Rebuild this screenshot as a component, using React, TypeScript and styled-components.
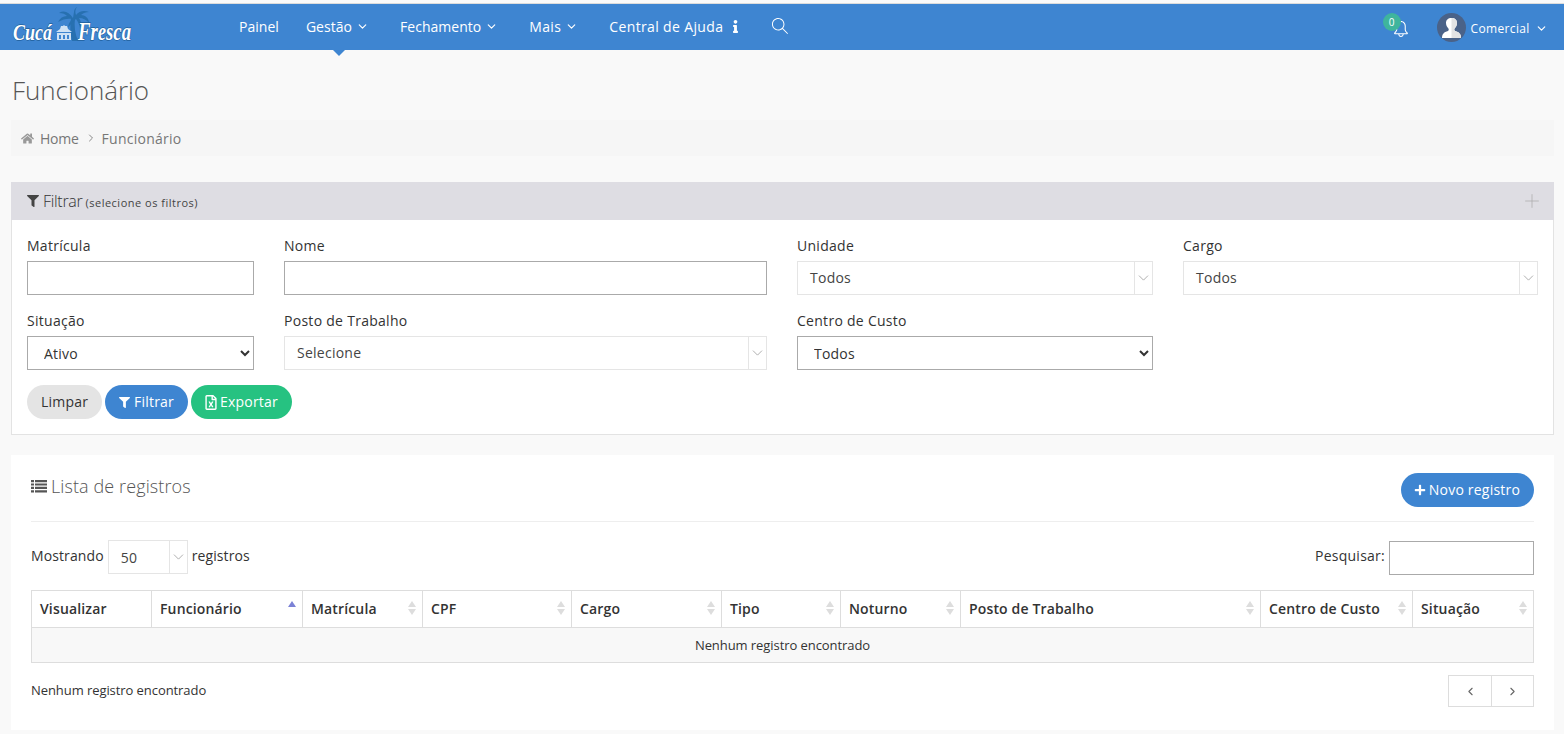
import React from "react";
import styled, { createGlobalStyle } from "styled-components";
import { ChevronDown, ChevronLeft, ChevronRight, Plus } from "lucide-react";
import { FaFilter, FaHome, FaInfo, FaPlus, FaRegFileExcel } from "react-icons/fa";
import { SlBell, SlMagnifier } from "react-icons/sl";

const Global = createGlobalStyle`
  html, body { margin: 0; padding: 0; background: #f9f9f9; }
  body { font-family: "Open Sans", "Liberation Sans", sans-serif; font-size: 14px; color: #333; overflow: hidden; }
  * { box-sizing: border-box; }
`;

const Page = styled.div`
  width: 1564px;
  height: 734px;
  background: #f9f9f9;
  overflow: hidden;
`;
const TopStrip = styled.div`
  height: 4px;
  background: #fafafa;
  border-bottom: 1px solid #dcdcdc;
`;
const TopBar = styled.header`
  height: 46px;
  background: #3e85d1;
  display: flex;
  align-items: center;
  color: #fff;
`;
const LogoBox = styled.div`
  width: 239px;
  padding-left: 10px;
  height: 46px;
  flex: none;
`;
const Nav = styled.nav`
  display: flex;
  align-items: center;
  gap: 27px;
  flex: 1;
`;
const NavItem = styled.a<{ $active?: boolean; $wide?: boolean }>`
  position: relative;
  display: flex;
  align-items: center;
  height: 46px;
  padding-bottom: 2px;
  font-size: 14px;
  letter-spacing: ${(p) => (p.$wide ? "0.36px" : "0.03px")};
  color: #fff;
  svg { flex: none; }
  ${(p) => p.$active && `
    &::after {
      content: "";
      position: absolute;
      left: 27px;
      top: 46px;
      border: 6px solid transparent;
      border-top-color: #3e85d1;
      border-bottom: 0;
    }
  `}
`;
const NavChevron = styled(ChevronDown)`
  margin-left: 4px;
  margin-right: 4px;
`;
const InfoIcon = styled(FaInfo)`
  margin-left: 6px;
  margin-right: 3px;
`;
const NavRight = styled.div`
  display: flex;
  align-items: center;
  height: 46px;
  padding-right: 16.5px;
`;
const BellBox = styled.div`
  position: relative;
  width: 17px;
  height: 18px;
  margin-right: 27px;
  margin-top: 6px;
`;
const Badge = styled.span`
  position: absolute;
  left: -10px;
  top: -8px;
  width: 18px;
  height: 18px;
  border-radius: 50%;
  background: #3fb59d;
  color: #fff;
  font-size: 10px;
  line-height: 18px;
  text-align: center;
`;
const Avatar = styled.div`
  width: 29px;
  height: 29px;
  border-radius: 50%;
  background: #4a6288;
  overflow: hidden;
  margin-right: 5px;
`;
const UserName = styled.span`
  font-size: 12px;
  letter-spacing: 0.35px;
  margin-top: 2px;
`;
const UserChevron = styled(ChevronDown)`
  margin-left: 4.75px;
  margin-top: 3px;
`;

const Title = styled.h1`
  margin: 22px 0 0 12px;
  font-size: 26px;
  line-height: 36px;
  font-weight: 300;
  color: #555;
  letter-spacing: -0.05px;
`;
const Breadcrumb = styled.div`
  margin: 12px 10px 0 11px;
  height: 36px;
  background: #f6f6f6;
  display: flex;
  align-items: center;
  padding-left: 10px;
  color: #777;
  font-size: 14px;
  letter-spacing: 0.25px;
  gap: 6px;
`;
const CrumbHome = styled.span`
  letter-spacing: -0.25px;
`;
const CrumbSep = styled(ChevronRight)`
  color: #888;
  margin-right: -1px;
`;

const FilterPanel = styled.section`
  margin: 26px 10px 0 11px;
  background: #fff;
  border: 1px solid #e3e3e3;
  border-top: 0;
  height: 253px;
`;
const FilterHead = styled.div`
  height: 38px;
  background: #dedde3;
  margin: 0 -1px;
  display: flex;
  align-items: center;
  padding: 0 16px;
  color: #444;
`;
const HeadTitle = styled.span`
  font-size: 16px;
  font-weight: 300;
  margin-left: 4px;
  letter-spacing: -0.3px;
  color: #333;
`;
const HeadSmall = styled.small`
  font-size: 11px;
  margin-left: 3px;
  letter-spacing: 0.5px;
  margin-top: 2px;
  color: #444;
`;
const HeadPlus = styled(Plus)`
  margin-left: auto;
  margin-right: -4.6px;
  color: #aaa;
`;
const FilterGrid = styled.div`
  display: grid;
  grid-template-columns: 227px 483px 356px 355px;
  column-gap: 30px;
  row-gap: 15px;
  padding: 15px 15px 0;
`;
const Field = styled.label`
  display: flex;
  flex-direction: column;
  min-width: 0;
`;
const FieldLabel = styled.span`
  font-size: 14px;
  line-height: 20px;
  letter-spacing: 0.28px;
  margin: 1px 0 5px;
  color: #333;
`;
const TextInput = styled.input`
  height: 34px;
  width: 100%;
  border: 1px solid #aaa;
  background: #fff;
  outline: 0;
  border-radius: 0;
`;
const NativeSelect = styled.select`
  height: 34px;
  width: 100%;
  border: 1px solid #aaa;
  background: #fff;
  border-radius: 0;
  padding-left: 12px;
  font-family: inherit;
  font-size: 14px;
  letter-spacing: 0.2px;
  color: #333;
`;
const Combo = styled.div<{ $width?: number }>`
  height: 34px;
  width: ${(p) => (p.$width ? `${p.$width}px` : "100%")};
  border: 1px solid #e5e5e5;
  background: #fff;
  display: flex;
  align-items: center;
  justify-content: space-between;
  padding-left: 12px;
  font-size: 14px;
  letter-spacing: 0.25px;
  color: #444;
  flex: none;
`;
const ComboValue = styled.span`
  margin-bottom: 2px;
`;
const ComboArrow = styled.span`
  width: 18px;
  height: 32px;
  border-left: 1px solid #e5e5e5;
  display: flex;
  align-items: center;
  justify-content: center;
  color: #999;
`;
const ButtonRow = styled.div`
  display: flex;
  gap: 3px;
  padding: 15px 15px 0;
`;
const Pill = styled.button<{ $bg: string; $fg: string }>`
  height: 34px;
  border: 0;
  border-radius: 17px;
  background: ${(p) => p.$bg};
  color: ${(p) => p.$fg};
  padding: 0 14px 2px;
  font-family: inherit;
  font-size: 14px;
  letter-spacing: 0.2px;
  display: inline-flex;
  align-items: center;
  gap: 3px;
`;
const FilterIcon = styled(FaFilter)`
  margin: 2px 1px 0 0;
`;
const ExcelIcon = styled(FaRegFileExcel)`
  width: 12px;
  height: 15px;
  margin-top: 2px;
`;
const PlusIcon = styled(FaPlus)`
  margin-top: 2px;
`;

const ListPanel = styled.section`
  margin: 20px 10px 0 11px;
  background: #fff;
  height: 275px;
  padding: 0 20px;
`;
const ListHead = styled.div`
  height: 67px;
  border-bottom: 1px solid #eee;
  display: flex;
  align-items: flex-start;
  justify-content: space-between;
  padding-top: 18px;
`;
const ListTitle = styled.h2`
  margin: 0;
  font-size: 18px;
  line-height: 26px;
  font-weight: 300;
  color: #555;
  letter-spacing: 0.1px;
  display: flex;
  align-items: center;
  gap: 4px;
`;
const NewButton = styled(Pill)`
  padding-left: 13px;
`;
const Controls = styled.div`
  display: flex;
  align-items: center;
  justify-content: space-between;
  margin-top: 19px;
  height: 34px;
`;
const ControlGroup = styled.div`
  display: flex;
  align-items: center;
  gap: 4px;
`;
const ControlText = styled.span<{ $wide?: boolean }>`
  font-size: 14px;
  letter-spacing: ${(p) => (p.$wide ? "0.25px" : "0.1px")};
  color: #333;
  margin-bottom: 6px;
`;
const LengthCombo = styled(Combo)`
  margin-bottom: 2px;
`;
const SearchInput = styled(TextInput)`
  width: 145px;
`;
const Table = styled.table`
  width: 1502px;
  margin-top: 15px;
  border-collapse: collapse;
  table-layout: fixed;
  border: 1px solid #ddd;
`;
const Th = styled.th`
  height: 37px;
  border: 1px solid #ddd;
  text-align: left;
  padding: 0 8px 2px;
  font-size: 14px;
  font-weight: 600;
  letter-spacing: 0.15px;
  color: #333;
  position: relative;
`;
const SortMark = styled.span<{ $up?: boolean }>`
  position: absolute;
  right: 6px;
  top: 10px;
  width: 8px;
  height: 15px;
  &::before {
    content: "";
    position: absolute;
    left: 0;
    top: 0;
    border: 4px solid transparent;
    border-top: 0;
    border-bottom: 6px solid ${(p) => (p.$up ? "#7b82d6" : "#ddd")};
  }
  &::after {
    content: "";
    position: absolute;
    left: 0;
    top: 8px;
    border: 4px solid transparent;
    border-bottom: 0;
    border-top: 6px solid ${(p) => (p.$up ? "transparent" : "#ddd")};
  }
`;
const EmptyCell = styled.td`
  height: 35px;
  border: 1px solid #ddd;
  background: #f8f8f8;
  text-align: center;
  font-size: 13px;
  letter-spacing: -0.07px;
  color: #333;
`;
const FooterRow = styled.div`
  display: flex;
  justify-content: space-between;
  align-items: flex-start;
  margin-top: 12px;
`;
const Info = styled.div`
  font-size: 13px;
  line-height: 30px;
  letter-spacing: -0.07px;
  color: #333;
`;
const Pager = styled.div`
  display: flex;
  border: 1px solid #ddd;
  height: 32px;
`;
const PageBtn = styled.span`
  width: 42px;
  display: flex;
  align-items: center;
  justify-content: center;
  color: #666;
  & + & { border-left: 1px solid #ddd; width: 42px; }
`;

const LogoSvg = styled.svg`
  display: block;
  overflow: visible;
`;
const LogoType = styled.text`
  font-family: "Liberation Serif", serif;
  font-style: italic;
  font-weight: 700;
  fill: #fff;
  stroke: #1f5f9c;
  stroke-width: 1.3px;
  paint-order: stroke;
`;

const Logo = () => (
  <LogoSvg width="124" height="46" viewBox="0 0 124 46">
    <g fill="#2770b0">
      <path d="M61 14c-1 8-1 15 1 23h6c-3-7-4-15-3-23z" />
      <path d="M63 14c-4-6-9-8-14-5 4 0 6 1 8 3-4 0-7 2-9 6 5-3 10-4 15-3-3 2-5 5-5 9 3-4 5-7 8-9 2 3 4 6 4 10 2-4 1-8-1-11 4 0 8 2 10 5 0-5-4-8-8-8 2-2 5-3 8-3-5-2-10-1-13 3-1-3-1-5 1-8-2 1-3 3-3 5z" />
    </g>
    <LogoType x="3" y="36" fontSize="24" textLength="39" lengthAdjust="spacingAndGlyphs">Cucá</LogoType>
    <LogoType x="68" y="36" fontSize="26" textLength="53" lengthAdjust="spacingAndGlyphs">Fresca</LogoType>
    <path d="M46 28l4-3 1-3h2l1-1 1 1h2l1 3 4 3z" fill="#cfe2f5" />
    <path d="M47 29h14v7H47z" fill="#cfe2f5" />
    <path d="M49 31h2v4h-2zM53 31h2v4h-2zM57 31h2v4h-2z" fill="#3e85d1" />
  </LogoSvg>
);

const UserIcon = () => (
  <svg width="29" height="29" viewBox="0 0 29 29">
    <path d="M5 25c0-4 2-6 6-7 1-1 1-2 0-3-1-1-2-3-2-5 0-3 2-5 5.500-5s5.500 2 5.500 5c0 2-1 4-2 5-1 1-1 2 0 3 4 1 6 3 6 7z" fill="#fff" />
    <path d="M14.500 5c3.500 0 5.500 2 5.500 5 0 2-1 4-2 5-1 1-1 2 0 3 4 1 6 3 6 7h-9.500z" fill="#e3e3e3" />
  </svg>
);

const ListIcon = () => (
  <svg width="16" height="13" viewBox="0 0 16 13" fill="#555">
    <path d="M0 0h3v2.200H0zM4 0h12v2.200H4zM0 3.400h3v2.200H0zM4 3.400h12v2.200H4zM0 6.800h3V9H0zM4 6.800h12V9H4zM0 10.200h3v2.200H0zM4 10.200h12v2.200H4z" />
  </svg>
);

const columns = [
  { name: "Visualizar", w: 120 },
  { name: "Funcionário", w: 151, up: true },
  { name: "Matrícula", w: 120, sort: true },
  { name: "CPF", w: 149, sort: true },
  { name: "Cargo", w: 150, sort: true },
  { name: "Tipo", w: 119, sort: true },
  { name: "Noturno", w: 120, sort: true },
  { name: "Posto de Trabalho", w: 300, sort: true },
  { name: "Centro de Custo", w: 152, sort: true },
  { name: "Situação", w: 121, sort: true },
];

const Arrow = () => <ChevronDown size={18} strokeWidth={1.1} />;

export default function App() {
  return (
    <Page>
      <Global />
      <TopStrip />
      <TopBar>
        <LogoBox><Logo /></LogoBox>
        <Nav>
          <NavItem>Painel</NavItem>
          <NavItem $active>Gestão<NavChevron size={13} strokeWidth={2.2} /></NavItem>
          <NavItem>Fechamento<NavChevron size={13} strokeWidth={2.2} /></NavItem>
          <NavItem $wide>Mais<NavChevron size={13} strokeWidth={2.2} /></NavItem>
          <NavItem $wide>Central de Ajuda<InfoIcon size={13} /></NavItem>
          <NavItem><SlMagnifier size={16} /></NavItem>
        </Nav>
        <NavRight>
          <BellBox>
            <SlBell size={16} />
            <Badge>0</Badge>
          </BellBox>
          <Avatar><UserIcon /></Avatar>
          <UserName>Comercial</UserName>
          <UserChevron size={13} strokeWidth={2.2} />
        </NavRight>
      </TopBar>

      <Title>Funcionário</Title>
      <Breadcrumb>
        <FaHome size={13} color="#999" />
        <CrumbHome>Home</CrumbHome>
        <CrumbSep size={12} />
        Funcionário
      </Breadcrumb>

      <FilterPanel>
        <FilterHead>
          <FaFilter size={12} />
          <HeadTitle>Filtrar</HeadTitle>
          <HeadSmall>(selecione os filtros)</HeadSmall>
          <HeadPlus size={22} strokeWidth={0.8} />
        </FilterHead>
        <FilterGrid>
          <Field><FieldLabel>Matrícula</FieldLabel><TextInput /></Field>
          <Field><FieldLabel>Nome</FieldLabel><TextInput /></Field>
          <Field><FieldLabel>Unidade</FieldLabel><Combo><ComboValue>Todos</ComboValue><ComboArrow><Arrow /></ComboArrow></Combo></Field>
          <Field><FieldLabel>Cargo</FieldLabel><Combo><ComboValue>Todos</ComboValue><ComboArrow><Arrow /></ComboArrow></Combo></Field>
          <Field><FieldLabel>Situação</FieldLabel><NativeSelect defaultValue="Ativo"><option>Ativo</option></NativeSelect></Field>
          <Field><FieldLabel>Posto de Trabalho</FieldLabel><Combo><ComboValue>Selecione</ComboValue><ComboArrow><Arrow /></ComboArrow></Combo></Field>
          <Field><FieldLabel>Centro de Custo</FieldLabel><NativeSelect defaultValue="Todos"><option>Todos</option></NativeSelect></Field>
        </FilterGrid>
        <ButtonRow>
          <Pill $bg="#e4e4e4" $fg="#333">Limpar</Pill>
          <Pill $bg="#3e85d1" $fg="#fff"><FilterIcon size={11} />Filtrar</Pill>
          <Pill $bg="#26c281" $fg="#fff"><ExcelIcon />Exportar</Pill>
        </ButtonRow>
      </FilterPanel>

      <ListPanel>
        <ListHead>
          <ListTitle><ListIcon />Lista de registros</ListTitle>
          <NewButton $bg="#3e85d1" $fg="#fff"><PlusIcon size={12} />Novo registro</NewButton>
        </ListHead>
        <Controls>
          <ControlGroup>
            <ControlText>Mostrando</ControlText>
            <LengthCombo $width={80}>50<ComboArrow><Arrow /></ComboArrow></LengthCombo>
            <ControlText>registros</ControlText>
          </ControlGroup>
          <ControlGroup>
            <ControlText $wide>Pesquisar:</ControlText>
            <SearchInput />
          </ControlGroup>
        </Controls>
        <Table>
          <colgroup>
            {columns.map((c) => <col key={c.name} style={{ width: c.w }} />)}
          </colgroup>
          <thead>
            <tr>
              {columns.map((c) => (
                <Th key={c.name}>
                  {c.name}
                  {c.sort && <SortMark />}
                  {c.up && <SortMark $up />}
                </Th>
              ))}
            </tr>
          </thead>
          <tbody>
            <tr><EmptyCell colSpan={10}>Nenhum registro encontrado</EmptyCell></tr>
          </tbody>
        </Table>
        <FooterRow>
          <Info>Nenhum registro encontrado</Info>
          <Pager>
            <PageBtn><ChevronLeft size={13} /></PageBtn>
            <PageBtn><ChevronRight size={13} /></PageBtn>
          </Pager>
        </FooterRow>
      </ListPanel>
    </Page>
  );
}
